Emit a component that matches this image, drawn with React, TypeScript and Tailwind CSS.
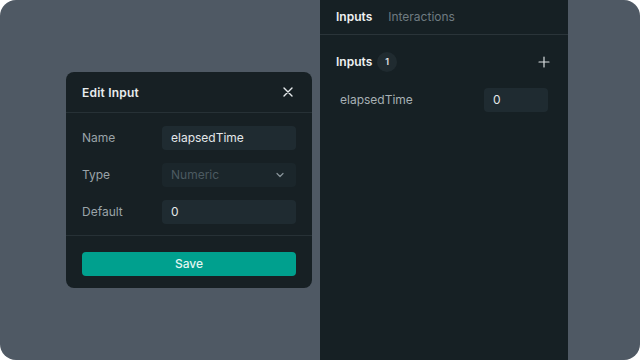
import React from 'react';

const font = { fontFamily: 'Inter, "Noto Sans", sans-serif' };

function Row({ label, children }: { label: string; children: React.ReactNode }) {
  return (
    <div className="flex items-center">
      <div className="w-[80px] text-[12px] text-[#9aa3a8]">{label}</div>
      <div className="flex-1">{children}</div>
    </div>
  );
}

export default function App() {
  return (
    <div className="w-[640px] h-[360px] bg-white" style={font}>
      <div className="w-full h-full rounded-[16px] bg-[#4f5964] flex overflow-hidden">
        {/* canvas area with modal */}
        <div className="w-[320px] pl-[66px] pt-[72px]">
          <div className="w-[246px] h-[216px] rounded-[8px] bg-[#172024] flex flex-col">
            <div className="h-[41px] px-4 flex items-center justify-between border-b border-[#273136]">
              <span className="text-[12px] font-semibold text-[#e8ecee] tracking-[0.2px] pt-[1px]">Edit Input</span>
              <svg width="12" height="12" viewBox="0 0 12 12" className="mr-[2px]">
                <path d="M2 2 L10 10 M10 2 L2 10" stroke="#e6eaec" strokeWidth="1.4" strokeLinecap="round" />
              </svg>
            </div>
            <div className="px-4 pt-[13px] pb-[11px] flex flex-col gap-[13px] border-b border-[#273136]">
              <Row label="Name">
                <div className="h-[24px] rounded-[4px] bg-[#1f2b31] px-[9px] flex items-center text-[12px] text-[#e3e7e9]">
                  elapsedTime
                </div>
              </Row>
              <Row label="Type">
                <div className="h-[24px] rounded-[4px] bg-[#1b262b] px-[9px] flex items-center justify-between text-[12px] text-[#4c5a61]">
                  <span>Numeric</span>
                  <svg width="10" height="10" viewBox="0 0 10 10" className="mr-[2px]">
                    <path d="M2 3.5 L5 6.5 L8 3.5" fill="none" stroke="#8a959b" strokeWidth="1.2" strokeLinecap="round" strokeLinejoin="round" />
                  </svg>
                </div>
              </Row>
              <Row label="Default">
                <div className="h-[24px] rounded-[4px] bg-[#1f2b31] px-[9px] flex items-center text-[12px] text-[#e3e7e9]">
                  0
                </div>
              </Row>
            </div>
            <div className="px-4 pt-4">
              <div className="h-[24px] rounded-[4px] bg-[#00a08e] flex items-center justify-center text-[12px] font-medium text-[#e2f6f2]">
                Save
              </div>
            </div>
          </div>
        </div>

        {/* right panel */}
        <div className="w-[248px] h-full bg-[#162024] flex flex-col">
          <div className="h-[35px] px-4 flex items-center gap-[16px] border-b border-[#2a3439]">
            <span className="text-[12px] font-semibold text-[#eef1f2]">Inputs</span>
            <span className="text-[12px] text-[#6f7b81]">Interactions</span>
          </div>
          <div className="px-4 pt-[17px] flex items-center justify-between">
            <div className="flex items-center gap-[5px]">
              <span className="text-[12px] font-semibold text-[#eef1f2]">Inputs</span>
              <span className="w-[20px] h-[20px] rounded-full bg-[#202b30] flex items-center justify-center text-[9px] font-semibold text-[#e3e7e9]">1</span>
            </div>
            <svg width="12" height="12" viewBox="0 0 12 12" className="mr-[2px]">
              <path d="M6 1 V11 M1 6 H11" stroke="#d9dee0" strokeWidth="1.2" strokeLinecap="round" />
            </svg>
          </div>
          <div className="pl-5 pr-5 pt-[16px] flex items-center justify-between">
            <span className="text-[12px] text-[#a7b0b4]">elapsedTime</span>
            <div className="w-[64px] h-[24px] rounded-[4px] bg-[#1f2b31] px-[9px] flex items-center text-[12px] text-[#e3e7e9]">0</div>
          </div>
        </div>
      </div>
    </div>
  );
}
